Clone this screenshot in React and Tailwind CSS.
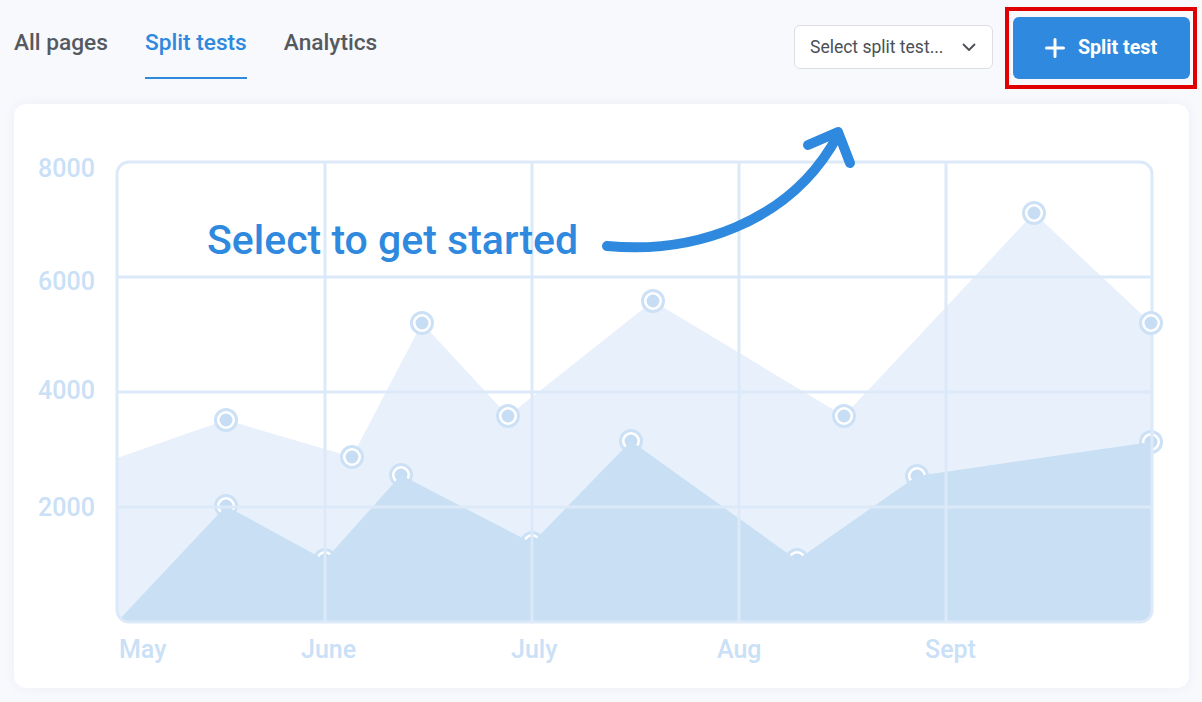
import React from "react";

const light = [
  [226, 420], [352, 457], [422, 323], [508, 416], [653, 301], [844, 416], [1034, 213], [1151, 323],
];
const dark = [
  [226, 506], [325, 560], [401, 475], [532, 543], [631, 441], [797, 560], [917, 476], [1151, 442],
];

function Marker({ x, y }) {
  return (
    <g>
      <circle cx={x} cy={y} r="10.5" fill="#ffffff" stroke="#cce1f6" strokeWidth="3" />
      <circle cx={x} cy={y} r="6.5" fill="#c7ddf4" />
    </g>
  );
}

function Chart() {
  const lightPath =
    "M117,458 " + light.map(([x, y]) => `L${x},${y}`).join(" ") + " L1152,323 L1152,622 L117,622 Z";
  const darkPath =
    "M117,622 " + dark.map(([x, y]) => `L${x},${y}`).join(" ") + " L1152,442 L1152,622 Z";
  return (
    <svg width="1175" height="584" viewBox="14 104 1175 584" className="block">
      <defs>
        <clipPath id="plot">
          <rect x="117" y="162" width="1035" height="460" rx="12" />
        </clipPath>
      </defs>
      <g clipPath="url(#plot)">
        <path d={lightPath} fill="#e8f1fb" />
      </g>
      {dark.map(([x, y], i) => (
        <Marker key={"d" + i} x={x} y={y} />
      ))}
      <g clipPath="url(#plot)">
        <path d={darkPath} fill="#c8dff4" />
      </g>
      <g stroke="#dce9f8" strokeWidth="3">
        {[277, 392, 507].map((y) => (
          <line key={y} x1="117" x2="1152" y1={y} y2={y} />
        ))}
        {[325, 532, 739, 946].map((x) => (
          <line key={x} x1={x} x2={x} y1="162" y2="622" />
        ))}
      </g>
      <rect x="117" y="162" width="1035" height="460" rx="12" fill="none" stroke="#dce9f8" strokeWidth="3" />
      {light.map(([x, y], i) => (
        <Marker key={"l" + i} x={x} y={y} />
      ))}
      <g
        fill="#c9e0f6"
        fontFamily="Roboto, 'Noto Sans', sans-serif"
        fontWeight="500"
        fontSize="25"
      >
        <text x="38" y="177">8000</text>
        <text x="38" y="290">6000</text>
        <text x="38" y="399">4000</text>
        <text x="38" y="516">2000</text>
        <text x="119" y="658">May</text>
        <text x="301" y="658">June</text>
        <text x="511" y="658">July</text>
        <text x="717" y="658">Aug</text>
        <text x="925" y="658">Sept</text>
      </g>
      <g fill="none" stroke="#2f89de" strokeWidth="10" strokeLinecap="round" strokeLinejoin="round">
        <path d="M607,246 C690,254 790,225 838,135" />
        <path d="M808,145 L838,132 L850,163" />
      </g>
    </svg>
  );
}

export default function App() {
  return (
    <div
      className="min-h-[702px] w-[1202px] bg-[#f8f9fd] pl-[14px] pr-[13px]"
      style={{ fontFamily: "Roboto, 'Noto Sans', sans-serif" }}
    >
      <div className="-mr-[8px] flex items-start justify-between pt-[7px]">
        <div className="mt-[21px] flex gap-[37px] text-[22.7px] font-medium leading-[30px]">
          <div className="border-b-2 border-transparent pb-[19px] text-[#555a61]">All pages</div>
          <div className="border-b-2 border-[#2f89de] pb-[19px] text-[#2f89de]">Split tests</div>
          <div className="border-b-2 border-transparent pb-[19px] text-[#555a61]">Analytics</div>
        </div>
        <div className="flex items-start gap-[12px]">
          <div className="mt-[18px] flex h-[44px] w-[199px] items-center justify-between rounded-md border border-[#dcdee2] bg-white pl-[15px] pr-[15px] text-[17.5px] text-[#4a4f56]">
            <span>Select split test...</span>
            <svg width="16" height="16" viewBox="0 0 16 16" fill="none" stroke="#4a4f56" strokeWidth="1.8" strokeLinecap="round" strokeLinejoin="round">
              <path d="M2.5 5.5 L8 11 L13.5 5.5" />
            </svg>
          </div>
          <div className="border-[4px] border-[#e00000] px-[3.5px] py-[6px]">
            <button className="flex h-[62px] w-[177px] items-center justify-center gap-[13px] rounded-md bg-[#2f89de] text-[19.7px] font-bold text-white">
              <svg width="20" height="20" viewBox="0 0 20 20" fill="none" stroke="white" strokeWidth="3" strokeLinecap="round">
                <path d="M10 1.5 V18.5 M1.5 10 H18.5" />
              </svg>
              <span>Split test</span>
            </button>
          </div>
        </div>
      </div>
      <div className="relative mt-[15px] h-[584px] w-[1175px] overflow-hidden rounded-xl bg-white shadow-[0_0_12px_rgba(40,60,120,0.06)]">
        <Chart />
        <div className="absolute left-[193px] top-[112px] text-[41px] font-medium leading-[48px] text-[#2f89de]">
          Select to get started
        </div>
      </div>
    </div>
  );
}
